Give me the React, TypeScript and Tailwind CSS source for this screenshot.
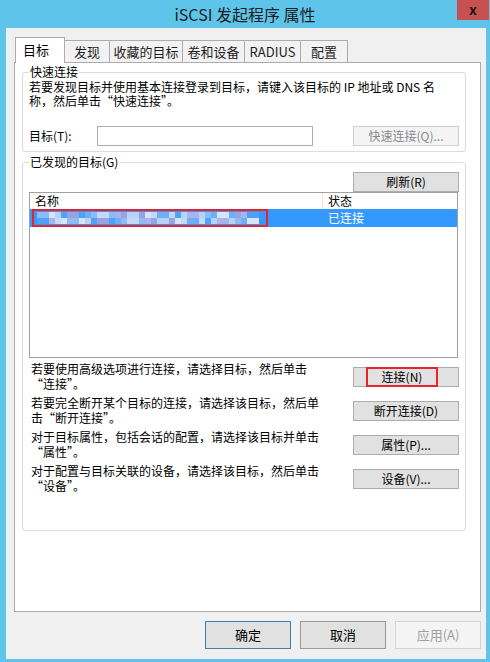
import type { ReactNode } from 'react'

const tabs = [
  { label: '发现', w: 'w-[45px]' },
  { label: '收藏的目标', w: 'w-[73px]' },
  { label: '卷和设备', w: 'w-[62px]' },
  { label: 'RADIUS', w: 'w-[56px]' },
  { label: '配置', w: 'w-[47px]' },
]

const actions = [
  { lines: ['若要使用高级选项进行连接，请选择目标，然后单击', '“连接”。'], btn: '连接(N)', marked: true },
  { lines: ['若要完全断开某个目标的连接，请选择该目标，然后单', '击“断开连接”。'], btn: '断开连接(D)' },
  { lines: ['对于目标属性，包括会话的配置，请选择该目标并单击', '“属性”。'], btn: '属性(P)...' },
  { lines: ['对于配置与目标关联的设备，请选择该目标，然后单击', '“设备”。'], btn: '设备(V)...' },
]

// pixelated (blurred out) target name
const palette = ['#8cbcf6', '#b5d2f8', '#d6e5fb', '#9aa3e2', '#6eaef7', '#4ea2fb', '#c3d9f9', '#a8b4ec']
const blocks: { x: number; y: number; c: string }[] = []
for (let i = 0; i < 37; i++) {
  for (let j = 0; j < 2; j++) {
    const k = (i * 7 + j * 5 + ((i * i) % 5)) % palette.length
    blocks.push({ x: i * 6, y: j * 6, c: palette[k] })
  }
}

function Btn({ children, className = '' }: { children: ReactNode; className?: string }) {
  return (
    <div className={`w-[106px] h-[20px] shrink-0 flex items-center justify-center border ${className}`}>
      {children}
    </div>
  )
}

export default function App() {
  return (
    <div className="w-[490px] h-[662px] bg-[#5fc4ea] flex flex-col font-['Noto_Sans_CJK_SC',sans-serif] text-[12px] leading-[14px] text-black">
      {/* Title bar */}
      <div className="h-[28px] shrink-0 grid grid-cols-[1fr_auto_1fr]">
        <div />
        <div className="text-[16px] leading-[28px] text-[#1e1e1e]">iSCSI 发起程序 属性</div>
        <div className="flex justify-end items-start pr-[1px]">
          <div className="w-[32px] h-[20px] bg-[#c75050] flex items-center justify-center text-[14px] leading-none font-bold text-[#1a1a1a] pb-[3px]">
            x
          </div>
        </div>
      </div>

      {/* Client area */}
      <div className="flex-1 ml-[6px] mr-[4px] mb-[3px] bg-[#f0f0f0] flex flex-col pt-[9px] pl-[8px] pr-[5px] pb-[10px]">
        {/* Tabs */}
        <div className="flex items-end relative z-10 -mb-px pl-px">
          <div className="w-[50px] h-[26px] bg-white border border-b-0 border-[#acacac] pl-[7px] pt-[4px] text-[13px] leading-[16px]">
            目标
          </div>
          {tabs.map((t) => (
            <div
              key={t.label}
              className={`${t.w} h-[22px] mb-px bg-[#f2f2f2] border-t border-r border-[#acacac] flex items-center justify-center text-[13px] text-[#1e1e1e]`}
            >
              {t.label}
            </div>
          ))}
        </div>

        {/* Tab panel */}
        <div className="flex-1 bg-white border border-[#acacac] flex flex-col pt-[2px] pl-[7px] pr-[14px]">
          {/* Quick connect */}
          <fieldset className="border border-[#dcdcdc] rounded-[3px] px-[6px] pb-[5px]">
            <legend className="px-[1px] leading-[14px]">快速连接</legend>
            <p className="mt-[1px]">
              若要发现目标并使用基本连接登录到目标，请键入该目标的 IP 地址或 DNS 名
              <br />
              称，然后单击“快速连接”。
            </p>
            <div className="mt-[18px] flex items-center">
              <span className="w-[68px]">目标(T):</span>
              <div className="w-[216px] h-[20px] border border-[#abadb3] bg-white" />
              <Btn className="ml-auto bg-[#f4f4f4] border-[#d0d0d0] text-[#8a8a8a]">快速连接(Q)...</Btn>
            </div>
          </fieldset>

          {/* Discovered targets */}
          <fieldset className="mt-[3px] border border-[#dcdcdc] rounded-[3px] px-[6px] pb-[37px] flex flex-col">
            <legend className="px-[1px] leading-[14px]">已发现的目标(G)</legend>
            <div className="mt-[3px] flex justify-end">
              <Btn className="bg-[#e1e1e1] border-[#adadad]">刷新(R)</Btn>
            </div>
            <div className="mr-[1px] h-[166px] border border-[#a0a0a0] flex flex-col">
              <div className="h-[16px] grid grid-cols-[293px_1fr] leading-[16px]">
                <div className="pl-[5px] border-r border-[#e5e5e5]">名称</div>
                <div className="pl-[5px]">状态</div>
              </div>
              <div className="h-[18px] grid grid-cols-[293px_1fr] bg-[#3399ff] leading-[18px]">
                <div className="pl-[2px]">
                  <div className="w-[236px] h-[18px] border-2 border-[#e8232b] flex items-center pl-[3px]">
                    <svg width="222" height="12" viewBox="0 0 222 12">
                      {blocks.map((b, i) => (
                        <rect key={i} x={b.x} y={b.y} width="6" height="6" fill={b.c} />
                      ))}
                    </svg>
                  </div>
                </div>
                <div className="pl-[5px] text-white">已连接</div>
              </div>
            </div>

            <div className="mt-[3px] flex flex-col gap-[4px]">
              {actions.map((a) => (
                <div key={a.btn} className="h-[30px] flex justify-between">
                  <p className="pl-[2px] leading-[15px]">
                    {a.lines[0]}
                    <br />
                    {a.lines[1]}
                  </p>
                  {a.marked ? (
                    <Btn className="mt-[6px] bg-[#e1e1e1] border-[#adadad] !justify-start pl-[12px]">
                      <span className="w-[72px] h-[20px] -my-px border-2 border-[#e8232b] flex items-center justify-center">
                        {a.btn}
                      </span>
                    </Btn>
                  ) : (
                    <Btn className="mt-[6px] bg-[#e1e1e1] border-[#adadad]">{a.btn}</Btn>
                  )}
                </div>
              ))}
            </div>
          </fieldset>
        </div>

        {/* Dialog buttons */}
        <div className="mt-[9px] flex justify-end gap-[9px] text-[13px]">
          <div className="w-[86px] h-[28px] flex items-center justify-center bg-[#e1e1e1] border border-[#3c7fb1]">确定</div>
          <div className="w-[86px] h-[28px] flex items-center justify-center bg-[#e1e1e1] border border-[#999999]">取消</div>
          <div className="w-[86px] h-[28px] flex items-center justify-center bg-[#f4f4f4] border border-[#d5d5d5] text-[#a0a0a0]">
            应用(A)
          </div>
        </div>
      </div>
    </div>
  )
}
